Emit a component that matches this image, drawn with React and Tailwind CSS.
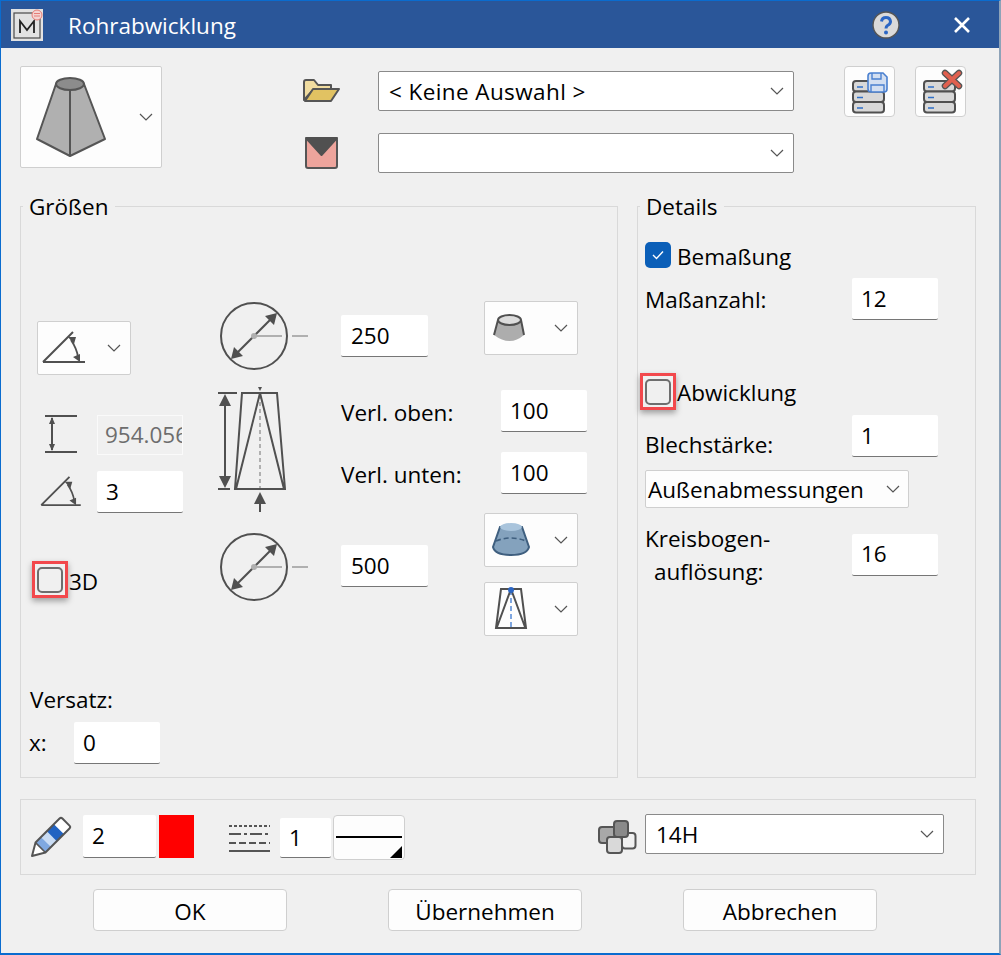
const Chevron = ({ className = '' }) => (
  <svg width="14" height="8" viewBox="0 0 14 8" className={className}>
    <path d="M1 1l6 6 6-6" fill="none" stroke="#555" strokeWidth="1.2" />
  </svg>
);

// text field with only a bottom line
function Field({ value, className = '' }) {
  return (
    <div className={`h-[42px] bg-white border-b border-[#767676] rounded-[2px] pl-[9px] flex items-center shrink-0 ${className}`}>
      {value}
    </div>
  );
}

function IconCombo({ icon, className = '' }) {
  return (
    <div className={`h-[54px] w-[94px] bg-[#fdfdfd] border border-[#cfcfcf] rounded-[2px] flex items-center justify-between pl-[6px] pr-[9px] shrink-0 ${className}`}>
      {icon}
      <Chevron />
    </div>
  );
}

function Select({ value, className = '', textClass = '' }) {
  return (
    <div className={`bg-white border border-[#8a8a8a] rounded-[2px] flex items-center justify-between pl-[10px] pr-[9px] ${className}`}>
      <span className={`mt-[2px] ${textClass}`}>{value}</span>
      <Chevron />
    </div>
  );
}

function Group({ title, className = '', children }) {
  return (
    <div className={`relative h-[572px] border border-[#d9d9d9] ${className}`}>
      <span className="absolute left-[2px] top-[-20px] bg-[#f0f0f0] px-[6px] leading-[40px] h-[30px]">{title}</span>
      {children}
    </div>
  );
}

function RedCheck({ className = '' }) {
  return (
    <div className={`w-[36px] h-[37px] border-[3px] border-[#f2484c] shadow-[0_3px_6px_rgba(0,0,0,0.35)] flex items-center justify-center shrink-0 ${className}`}>
      <div className="w-[26px] h-[26px] rounded-[5px] border-2 border-[#6e6e6e] bg-[#f0f0f0]" />
    </div>
  );
}

function Button({ label, className = '' }) {
  return (
    <div className={`w-[194px] h-[42px] bg-[#fdfdfd] border border-[#cfcfcf] rounded-[4px] pt-[3px] flex items-center justify-center ${className}`}>
      {label}
    </div>
  );
}

const AngleIcon = ({ width = 44, height = 34, className = '' }) => (
  <svg width={width} height={height} viewBox="0 0 44 34" className={`shrink-0 ${className}`}>
    <path d="M1 31H43M1 31L31 1" fill="none" stroke="#505050" strokeWidth="2" />
    <path d="M29 9Q35 18 36 26" fill="none" stroke="#505050" strokeWidth="1.8" />
    <path d="M26 6l8 0-2 7zM38 31l-7-5 7-3z" fill="#505050" />
  </svg>
);

function DiameterIcon() {
  return (
    <svg width="90" height="70" viewBox="219 302 90 70" className="shrink-0">
      <circle cx="254" cy="336" r="33" fill="none" stroke="#505050" strokeWidth="2" />
      <path d="M254 336H282M292 336H308" stroke="#b0b0b0" strokeWidth="2" />
      <path d="M234 356L274 316" stroke="#505050" strokeWidth="2" />
      <path d="M277 313l-3 12-9-9zM231 359l3-12 9 9z" fill="#505050" />
      <circle cx="254" cy="336" r="3" fill="#b0b0b0" />
    </svg>
  );
}

function TaperIcon() {
  return (
    <svg width="72" height="126" viewBox="216 387 72 126" className="shrink-0">
      <path d="M218 393H237M218 489H230" stroke="#505050" strokeWidth="2" />
      <path d="M225 398V484" stroke="#505050" strokeWidth="2" />
      <path d="M225 394l-6 12h12zM225 488l-6-12h12z" fill="#505050" />
      <path d="M260 395V488" stroke="#b0b0b0" strokeWidth="2" strokeDasharray="4 3" />
      <path d="M242 393H277L285 489H235ZM260 393L236 489M260 393L284 489" fill="none" stroke="#505050" strokeWidth="2" />
      <path d="M258 387h4l-2 4z" fill="#505050" />
      <path d="M260 502V512" stroke="#505050" strokeWidth="2" />
      <path d="M260 492l-6 12h12z" fill="#505050" />
    </svg>
  );
}

function DbStack({ children, x = 853 }) {
  return (
    <svg width="51" height="51" viewBox={`${x - 9} 66 51 51`} className="-m-px">
      {[81, 91.5, 102].map((y) => (
        <g key={y}>
          <rect x={x} y={y} width="31" height="10.5" rx="3" fill="#d8d8d8" stroke="#505050" strokeWidth="2" />
          <path d={`M${x + 4} ${y + 6}h6`} stroke="#2f6fc8" strokeWidth="1.6" />
        </g>
      ))}
      {children}
    </svg>
  );
}

export default function App() {
  return (
    <div className="w-[1001px] h-[955px] flex flex-col bg-[#f0f0f0] border-t border-l border-b-2 border-r-2 border-t-[#0a6ccf] border-l-[#0a6ccf] border-b-[#0a6ccf] border-r-[#8ea3b8] text-black text-[22.5px] font-['Open_Sans',sans-serif] overflow-hidden">
      {/* Title bar */}
      <div className="h-[47px] bg-[#2a5699] flex items-center text-white shrink-0">
        <svg width="32" height="32" viewBox="0 0 32 32" className="ml-[10px] shrink-0">
          <rect width="32" height="32" fill="#e2e2e2" />
          <rect x="3" y="4" width="26" height="25" fill="none" stroke="#4a4a4a" strokeWidth="1.2" />
          <path d="M9 24V12l7 9 7-9v12" fill="none" stroke="#222" strokeWidth="1.8" />
          <circle cx="26" cy="6" r="5" fill="#f4d4d2" stroke="#e67c76" />
          <path d="M23 4.5h6M23 7h6" stroke="#e67c76" />
        </svg>
        <span className="ml-[25px] mt-[3px]">Rohrabwicklung</span>
        <svg width="28" height="28" viewBox="0 0 28 28" className="ml-auto shrink-0">
          <circle cx="14" cy="14" r="13" fill="#dadada" stroke="#555" strokeWidth="1.4" />
          <path d="M9.5 10.5Q10 6.5 14 6.5T18.500 10.500Q18.500 13 15.500 14.500Q14 15.500 14 17.500" fill="none" stroke="#2b66c4" strokeWidth="3" />
          <circle cx="14" cy="21.500" r="2" fill="#2b66c4" />
        </svg>
        <svg width="16" height="16" viewBox="0 0 16 16" className="ml-[54px] mr-[29px] shrink-0">
          <path d="M1 1L15 15M15 1L1 15" stroke="#fff" strokeWidth="2.6" />
        </svg>
      </div>

      <div className="pl-[19px] flex flex-col">
        {/* Top row */}
        <div className="flex mt-[18px] h-[107px]">
          <div className="w-[142px] h-[102px] bg-[#fdfdfd] border border-[#cfcfcf] rounded-[2px] flex items-center justify-between pl-[14px] pr-[8px]">
            <svg width="72" height="82" viewBox="35 76 72 82">
              <path d="M56 84L37 139L70 156L105 139L84 84Z" fill="#b0b0b0" stroke="#555" strokeWidth="2" strokeLinejoin="round" />
              <path d="M70 90V156" stroke="#555" strokeWidth="2" />
              <ellipse cx="70" cy="84" rx="14" ry="6" fill="#8c8c8c" stroke="#555" strokeWidth="2" />
            </svg>
            <Chevron />
          </div>
          <div className="flex flex-col gap-[22px] mt-[5px] ml-[141px]">
            <div className="flex items-center h-[40px]">
              <svg width="38" height="24" viewBox="303 78 38 24" className="shrink-0">
                <path d="M304 99V81Q304 79 306 79H314L318 84H331V88H314Z" fill="#f0dca0" stroke="#555" strokeWidth="2" strokeLinejoin="round" />
                <path d="M305 100L313 88H339L331 100Z" fill="#e1c262" stroke="#555" strokeWidth="2" strokeLinejoin="round" />
              </svg>
              <Select value="< Keine Auswahl >" textClass="tracking-[0.4px]" className="w-[416px] h-[40px] ml-[37px]" />
            </div>
            <div className="flex items-center h-[40px]">
              <svg width="38" height="34" viewBox="303 134 38 34" className="shrink-0">
                <rect x="306" y="136" width="31" height="30" rx="2" fill="#eda49c" stroke="#555" strokeWidth="2" />
                <path d="M306 136H337L321.500 153Z" fill="#505050" stroke="#505050" strokeWidth="2" strokeLinejoin="round" />
              </svg>
              <Select value="" className="w-[416px] h-[40px] ml-[37px]" />
            </div>
          </div>
          <div className="w-[51px] h-[51px] ml-[50px] bg-[#fdfdfd] border border-[#cfcfcf] rounded-[4px] overflow-hidden">
            <DbStack>
              <path d="M868 76Q868 73 871 73H883L887 77V89Q887 92 884 92H871Q868 92 868 89Z" fill="#d3dff1" stroke="#4a80d0" strokeWidth="1.6" />
              <path d="M872 73V79H881V73M871 92V85H884V92" fill="none" stroke="#4a80d0" strokeWidth="1.4" />
            </DbStack>
          </div>
          <div className="w-[51px] h-[51px] ml-[20px] bg-[#fdfdfd] border border-[#cfcfcf] rounded-[4px] overflow-hidden">
            <DbStack x={924}>
              <path d="M945 73L959 86M959 73L945 86" stroke="#555" strokeWidth="6.500" strokeLinecap="round" />
              <path d="M945 73L959 86M959 73L945 86" stroke="#e0604f" strokeWidth="4" strokeLinecap="round" />
            </DbStack>
          </div>
        </div>

        {/* Groups */}
        <div className="flex mt-[33px]">
          <Group title="Größen" className="w-[598px] flex">
            <div className="w-[146px] ml-[16px] flex flex-col shrink-0">
              <IconCombo icon={<AngleIcon className="ml-[-2px]" />} className="mt-[114px]" />
              <div className="flex items-center mt-[40px] h-[40px]">
                <svg width="34" height="40" viewBox="44 417 34 40" className="ml-[7px] shrink-0">
                  <path d="M45 418H77M45 454H77" stroke="#505050" strokeWidth="2" />
                  <path d="M52 420V452" stroke="#505050" strokeWidth="2" />
                  <path d="M52 419l-3 7h6zM52 453l-3-7h6z" fill="#505050" />
                </svg>
                <div className="w-[86px] h-[40px] ml-[19px] bg-[#f0f0f0] border border-[#fafafa] pl-[7px] flex items-center overflow-hidden whitespace-nowrap text-[#6d6d6d]">954.056</div>
              </div>
              <div className="flex items-center mt-[16px]">
                <AngleIcon width={42} height={32} className="ml-[3px]" />
                <Field value="3" className="w-[86px] ml-[15px]" />
              </div>
              <div className="flex items-center mt-[48px] ml-[-5px]">
                <RedCheck className="mb-[4px]" />
                <span className="ml-[1px]">3D</span>
              </div>
              <div className="mt-[83px] ml-[-7px] h-[30px] flex items-center">Versatz:</div>
              <div className="flex items-center mt-[7px] ml-[-8px]">
                <span className="w-[45px]">x:</span>
                <Field value="0" className="w-[86px]" />
              </div>
            </div>

            <div className="ml-[36px] w-[90px] flex flex-col shrink-0">
              <div className="mt-[95px]"><DiameterIcon /></div>
              <div className="mt-[15px] ml-[-3px]"><TaperIcon /></div>
              <div className="mt-[20px]"><DiameterIcon /></div>
            </div>

            <div className="ml-[32px] flex flex-col w-[246px] shrink-0">
              <div className="flex mt-[94px]">
                <Field value={<span className="ml-[1px]">250</span>} className="w-[87px] mt-[14px]" />
                <IconCombo
                  className="ml-[56px]"
                  icon={
                    <svg width="42" height="30" viewBox="491 314 42 30">
                      <path d="M498 321L494 336Q510 348 524 336L521 321Z" fill="#adadad" />
                      <path d="M498 321L494 336M521 321L524 336" stroke="#505050" strokeWidth="2" />
                      <ellipse cx="509.500" cy="321" rx="11.500" ry="5" fill="#dcdcdc" stroke="#505050" strokeWidth="2" />
                    </svg>
                  }
                />
              </div>
              <div className="flex items-center mt-[33px]">
                <span className="w-[160px] mt-[4px]">Verl. oben:</span>
                <Field value="100" className="w-[86px]" />
              </div>
              <div className="flex items-center mt-[20px]">
                <span className="w-[160px] mt-[4px]">Verl. unten:</span>
                <Field value="100" className="w-[86px]" />
              </div>
              <div className="flex mt-[19px]">
                <Field value={<span className="ml-[1px]">500</span>} className="w-[87px] mt-[32px]" />
                <div className="ml-[56px] flex flex-col gap-[15px]">
                  <IconCombo
                    icon={
                      <svg width="40" height="40" viewBox="491 520 40 40">
                        <path d="M500 527L493 547Q495 555 511 555T529 547L522 527Z" fill="#84a2bd" stroke="#3f5f7f" strokeWidth="2" />
                        <ellipse cx="511" cy="527" rx="11" ry="4" fill="#a9c4dc" />
                        <path d="M496 541Q511 535 526 541" fill="none" stroke="#3f5f7f" strokeWidth="1.6" strokeDasharray="5 3" />
                      </svg>
                    }
                  />
                  <IconCombo
                    icon={
                      <svg width="40" height="46" viewBox="491 586 40 46">
                        <path d="M511 590V628" stroke="#7ea6e0" strokeWidth="2" strokeDasharray="5 3" />
                        <path d="M501 589H521L526 628H496ZM511 589L497 627M511 589L525 627" fill="none" stroke="#505050" strokeWidth="2" />
                        <circle cx="511" cy="590" r="3" fill="#2b66c4" />
                      </svg>
                    }
                  />
                </div>
              </div>
            </div>
          </Group>

          <Group title="Details" className="w-[339px] ml-[19px] flex flex-col pl-[7px]">
            <div className="flex items-center mt-[35px] h-[26px]">
              <div className="w-[26px] h-[26px] rounded-[5px] bg-[#0b5fb8] flex items-center justify-center">
                <svg width="14" height="12" viewBox="0 0 14 12">
                  <path d="M2 6l3.500 3.500L12 2.500" fill="none" stroke="#fff" strokeWidth="1.4" />
                </svg>
              </div>
              <span className="ml-[6px] mt-[3px]">Bemaßung</span>
            </div>
            <div className="flex items-center justify-between w-[293px] mt-[10px]">
              <span className="mt-[2px]">Maßanzahl:</span>
              <Field value="12" className="w-[86px]" />
            </div>
            <div className="flex items-center mt-[53px] ml-[-5px]">
              <RedCheck />
              <span className="ml-[1px] mt-[2px]">Abwicklung</span>
            </div>
            <div className="flex items-start justify-between w-[293px] mt-[5px]">
              <span className="mt-[13px]">Blechstärke:</span>
              <Field value="1" className="w-[86px]" />
            </div>
            <div className="w-[264px] h-[38px] mt-[8px] bg-[#fdfdfd] border border-[#cfcfcf] rounded-[2px] flex items-center justify-between pl-[2px] pr-[8px]">
              <span className="mt-[2px]">Außenabmessungen</span>
              <Chevron />
            </div>
            <div className="flex items-start justify-between w-[293px] mt-[26px]">
              <div className="leading-[33px] mt-[-12px]">
                <div>Kreisbogen-</div>
                <div className="pl-[9px]">auflösung:</div>
              </div>
              <Field value="16" className="w-[86px]" />
            </div>
          </Group>
        </div>

        {/* Attributes */}
        <div className="w-[956px] h-[76px] mt-[21px] border border-[#d9d9d9] flex items-center">
          <svg width="42" height="42" viewBox="29 816 42 42" className="ml-[9px] shrink-0">
            <g transform="translate(31 856) rotate(-45)">
              <path d="M0 0L12 -7H46Q48 -7 48 -5V5Q48 7 46 7H12Z" fill="#fff" />
              <rect x="12" y="-7" width="8" height="14" fill="#7fa8e0" />
              <rect x="20" y="-7" width="8" height="14" fill="#c9dcf4" />
              <rect x="28" y="-7" width="10" height="14" fill="#2163c2" />
              <path d="M0 0L12 -7H46Q48 -7 48 -5V5Q48 7 46 7H12Z" fill="none" stroke="#555" strokeWidth="2" strokeLinejoin="round" />
              <path d="M12 -7V7" stroke="#555" strokeWidth="1.6" />
            </g>
          </svg>
          <Field value="2" className="w-[73px] !h-[43px] ml-[11px] mb-[2px]" />
          <div className="w-[35px] h-[43px] ml-[3px] mb-[2px] bg-[#ff0000] shrink-0" />
          <svg width="42" height="28" viewBox="229 825 42 28" className="ml-[35px] mt-[4px] shrink-0">
            <path d="M229 826H270" stroke="#555" strokeWidth="1.800" strokeDasharray="3 2" />
            <path d="M229 834H270" stroke="#555" strokeWidth="2" strokeDasharray="12 3 3 3" />
            <path d="M229 843H270" stroke="#555" strokeWidth="2" strokeDasharray="7 3" />
            <path d="M229 851H270" stroke="#555" strokeWidth="2" />
          </svg>
          <Field value="1" className="w-[51px] !h-[40px] ml-[9px] mt-[2px]" />
          <div className="w-[72px] h-[45px] ml-[2px] bg-[#fdfdfd] border border-[#cfcfcf] rounded-[4px] flex flex-col items-stretch px-[2px] shrink-0">
            <div className="h-[2px] bg-black mt-[20px]" />
            <svg width="12" height="12" viewBox="0 0 12 12" className="self-end mt-[8px]">
              <path d="M12 0V12H0Z" fill="#000" />
            </svg>
          </div>
          <svg width="40" height="36" viewBox="597 819 40 36" className="ml-[192px] shrink-0">
            <rect x="599" y="827" width="17" height="16" rx="3" fill="#a8a8a8" stroke="#555" strokeWidth="2" />
            <rect x="622" y="833" width="13.500" height="15.500" rx="3" fill="#f0f0f0" stroke="#555" strokeWidth="2" />
            <rect x="614" y="821" width="14" height="16" rx="3" fill="#8a8a8a" stroke="#555" strokeWidth="2" />
            <rect x="607" y="837" width="15" height="16" rx="3" fill="#d9d9d9" stroke="#555" strokeWidth="2" />
          </svg>
          <Select value="14H" className="w-[299px] h-[40px] ml-[8px] mb-[6px]" />
        </div>

        {/* Buttons */}
        <div className="flex mt-[14px] ml-[73px] gap-[101px]">
          <Button label="OK" />
          <Button label="Übernehmen" />
          <Button label="Abbrechen" />
        </div>
      </div>
    </div>
  );
}
